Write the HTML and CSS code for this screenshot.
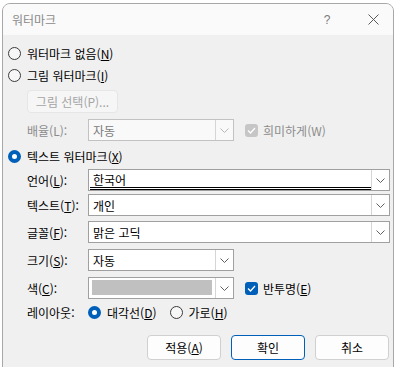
FILE: index.html
```html
<!DOCTYPE html>
<html lang="ko">
<head>
    <meta charset="UTF-8">
    <title>워터마크</title>
    <link rel="stylesheet" href="styles.css">
</head>
<body>

<div class="dialog">
    <div class="titlebar">
        <span class="title">워터마크</span>
        <span class="help">?</span>
        <span class="close">
            <svg width="11" height="11" viewBox="0 0 11 11"><path d="M0.5 0.5L10.5 10.5M10.5 0.5L0.5 10.5" stroke="#5a5a5a" stroke-width="1" fill="none"/></svg>
        </span>
    </div>

    <div class="content">
        <div class="row opt-none">
            <span class="radio"></span>
            <span>워터마크 없음(<u>N</u>)</span>
        </div>
        <div class="row opt-pic">
            <span class="radio"></span>
            <span>그림 워터마크(<u>I</u>)</span>
        </div>
        <div class="pic-btn">그림 선택(P)...</div>

        <div class="field row-scale disabled">
            <span class="label">배율(L):</span>
            <div class="combo narrow off">
                <span class="value">자동</span>
                <span class="drop">
                    <svg width="9" height="5" viewBox="0 0 9 5"><path d="M0.5 0.5L4.5 4.5L8.5 0.5" stroke="#b8b8b8" fill="none"/></svg>
                </span>
            </div>
            <span class="check off"><svg width="9" height="7" viewBox="0 0 9 7"><path d="M1 3.5L3.5 6L8 1" stroke="#fff" stroke-width="1.3" fill="none"/></svg></span>
            <span class="check-label">희미하게(W)</span>
        </div>

        <div class="row opt-text">
            <span class="radio on"></span>
            <span>텍스트 워터마크(<u>X</u>)</span>
        </div>

        <div class="field row-lang">
            <span class="label">언어(<u>L</u>):</span>
            <div class="combo wide edit">
                <span class="value underline">한국어</span>
                <span class="drop">
                    <svg width="9" height="5" viewBox="0 0 9 5"><path d="M0.5 0.5L4.5 4.5L8.5 0.5" stroke="#606060" fill="none"/></svg>
                </span>
            </div>
        </div>

        <div class="field row-text">
            <span class="label">텍스트(<u>T</u>):</span>
            <div class="combo wide edit">
                <span class="value">개인</span>
                <span class="drop">
                    <svg width="9" height="5" viewBox="0 0 9 5"><path d="M0.5 0.5L4.5 4.5L8.5 0.5" stroke="#606060" fill="none"/></svg>
                </span>
            </div>
        </div>

        <div class="field row-font">
            <span class="label">글꼴(<u>F</u>):</span>
            <div class="combo wide edit">
                <span class="value">맑은 고딕</span>
                <span class="drop">
                    <svg width="9" height="5" viewBox="0 0 9 5"><path d="M0.5 0.5L4.5 4.5L8.5 0.5" stroke="#606060" fill="none"/></svg>
                </span>
            </div>
        </div>

        <div class="field row-size">
            <span class="label">크기(<u>S</u>):</span>
            <div class="combo narrow">
                <span class="value">자동</span>
                <span class="drop">
                    <svg width="9" height="5" viewBox="0 0 9 5"><path d="M0.5 0.5L4.5 4.5L8.5 0.5" stroke="#606060" fill="none"/></svg>
                </span>
            </div>
        </div>

        <div class="field row-color">
            <span class="label">색(<u>C</u>):</span>
            <div class="combo narrow">
                <span class="swatch"></span>
                <span class="drop">
                    <svg width="9" height="5" viewBox="0 0 9 5"><path d="M0.5 0.5L4.5 4.5L8.5 0.5" stroke="#606060" fill="none"/></svg>
                </span>
            </div>
            <span class="check on"><svg width="9" height="7" viewBox="0 0 9 7"><path d="M1 3.5L3.5 6L8 1" stroke="#fff" stroke-width="1.3" fill="none"/></svg></span>
            <span class="check-label">반투명(<u>E</u>)</span>
        </div>

        <div class="field row-layout">
            <span class="label">레이아웃:</span>
            <span class="radio on"></span>
            <span class="opt-label">대각선(<u>D</u>)</span>
            <span class="radio second"></span>
            <span class="opt-label">가로(<u>H</u>)</span>
        </div>

        <div class="buttons">
            <button class="btn">적용(<u>A</u>)</button>
            <button class="btn primary">확인</button>
            <button class="btn">취소</button>
        </div>
    </div>
</div>

</body>
</html>
```

FILE: styles.css
```css
body {
    margin: 0;
    background-color: #ffffff;
    font-family: "Noto Sans CJK KR", "Noto Sans", sans-serif;
    font-size: 12px;
    color: #000;
}

u {
    text-underline-offset: 1px;
}

.dialog {
    margin: 3px 0 0 2px;
    width: 392px;
    height: 372px;
    box-sizing: border-box;
    border: 1px solid #a8a8a8;
    border-radius: 8px;
    background-color: #f0f0f0;
    overflow: hidden;
}

.titlebar {
    height: 31px;
    background-color: #fafafa;
    display: flex;
    align-items: center;
}

.title {
    padding-left: 9px;
    color: #8a8a8a;
}

.help {
    margin-left: auto;
    width: 20px;
    text-align: center;
    color: #7a7a7a;
    font-family: "Liberation Sans", sans-serif;
}

.close {
    width: 30px;
    margin-left: 21px;
    margin-right: 5px;
    display: flex;
    justify-content: center;
}

.content {
    padding-left: 5px;
}

.row {
    height: 22px;
    display: flex;
    align-items: center;
}

.opt-none {
    margin-top: 7px;
}

.opt-text {
    margin-top: 4px;
}

.radio {
    width: 13px;
    height: 13px;
    box-sizing: border-box;
    border: 1px solid #3a3a3a;
    border-radius: 50%;
    background-color: #f7f7f7;
    margin-right: 6px;
    flex-shrink: 0;
}

.radio.on {
    border: 4px solid #005fb8;
    background-color: #fff;
}

.pic-btn {
    margin: 4px 0 0 19px;
    width: 91px;
    height: 23px;
    box-sizing: border-box;
    border: 1px solid #e6e6e6;
    border-radius: 4px;
    background-color: #f6f6f6;
    color: #a5a5a5;
    display: flex;
    align-items: center;
    justify-content: center;
}

.field {
    margin-left: 19px;
    height: 22px;
    display: flex;
    align-items: center;
}

.field .label {
    width: 61px;
    flex-shrink: 0;
}

.disabled .label,
.disabled .check-label {
    color: #8c8c8c;
}

.row-scale { margin-top: 6px; }
.row-lang { margin-top: 2px; }
.row-text { margin-top: 3px; }
.row-font { margin-top: 5px; }
.row-size { margin-top: 6px; }
.row-color { margin-top: 6px; }
.row-layout { margin-top: 2px; }

.combo {
    height: 22px;
    box-sizing: border-box;
    border: 1px solid #a0a0a0;
    background-color: #fff;
    display: flex;
    align-items: stretch;
}

.combo.wide {
    width: 302px;
}

.combo.narrow {
    width: 146px;
}

.combo.off {
    border-color: #c2c2c2;
    background-color: #f9f9f9;
    color: #7a7a7a;
}

.combo .value {
    flex-grow: 1;
    padding-left: 4px;
    display: flex;
    align-items: center;
}

.combo .value.underline {
    margin: 1px 0 0 1px;
    padding-left: 3px;
    border-bottom: 3px double #000;
}

.combo .drop {
    width: 17px;
    border-left: 1px solid #d5d5d5;
    display: flex;
    align-items: center;
    justify-content: center;
    margin-left: auto;
}

.combo .swatch {
    flex-grow: 1;
    margin: 2px 3px 3px 3px;
    background-color: #c0c0c0;
}

.check {
    width: 13px;
    height: 13px;
    border-radius: 3px;
    margin-left: 11px;
    margin-right: 5px;
    display: flex;
    align-items: center;
    justify-content: center;
    flex-shrink: 0;
}

.check.off {
    background-color: #c6c6c6;
}

.check.on {
    background-color: #005fb8;
}

.opt-label {
    margin-right: 13px;
}

.buttons {
    margin-top: 12px;
    display: flex;
    justify-content: flex-end;
    gap: 10px;
    padding-right: 4px;
}

.btn {
    width: 74px;
    height: 25px;
    box-sizing: border-box;
    border: 1px solid #d0d0d0;
    border-radius: 4px;
    background-color: #fdfdfd;
    font-family: inherit;
    font-size: 12px;
    color: #000;
    padding: 0;
}

.btn.primary {
    border-color: #005fb8;
}
```
